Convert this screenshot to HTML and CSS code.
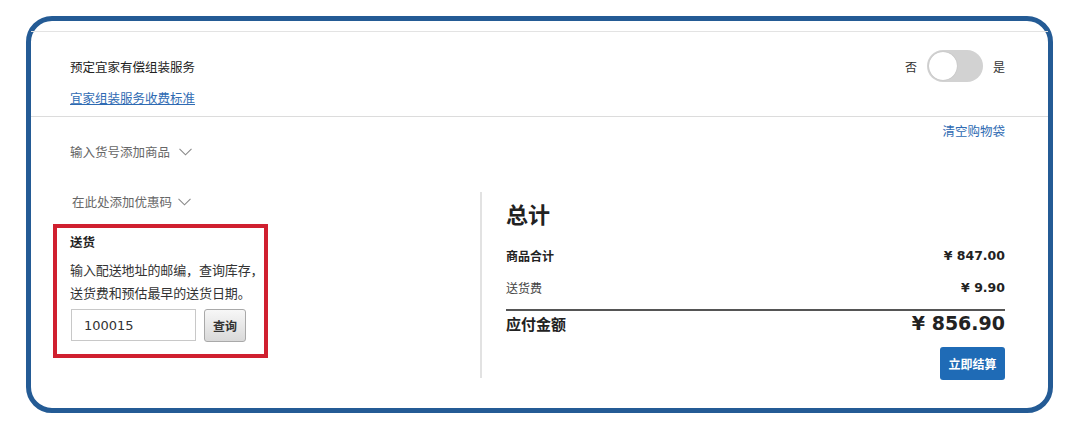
FILE: index.html
```html
<!DOCTYPE html>
<html lang="zh-CN">
<head>
    <meta charset="UTF-8">
    <meta name="viewport" content="width=device-width, initial-scale=1.0">
    <title>购物袋</title>
    <link rel="stylesheet" href="styles.css">
</head>
<body>
    <div class="frame">
        <div class="assembly">
            <div class="assembly-info">
                <p class="assembly-title">预定宜家有偿组装服务</p>
                <a class="link" href="#">宜家组装服务收费标准</a>
            </div>
            <div class="switch-row">
                <span>否</span>
                <span class="switch"><span class="knob"></span></span>
                <span>是</span>
            </div>
        </div>

        <div class="cart-head"><a class="clear-link" href="#">清空购物袋</a></div>

        <div class="cart-body">
            <div class="cart-tools">
                <div class="expander">输入货号添加商品
                    <svg class="chevron" width="13" height="8" viewBox="0 0 13 8"><polyline points="0.5,0.8 6.5,6.8 12.5,0.8" fill="none" stroke="#8a8a8a" stroke-width="1.1"/></svg>
                </div>
                <div class="expander promo">在此处添加优惠码
                    <svg class="chevron" width="13" height="8" viewBox="0 0 13 8"><polyline points="0.5,0.8 6.5,6.8 12.5,0.8" fill="none" stroke="#8a8a8a" stroke-width="1.1"/></svg>
                </div>

                <div class="delivery">
                    <h4>送货</h4>
                    <p>输入配送地址的邮编，查询库存，<br>送货费和预估最早的送货日期。</p>
                    <div class="zip-form">
                        <input class="zip-input" type="text" value="100015">
                        <button class="zip-btn">查询</button>
                    </div>
                </div>
            </div>

            <div class="summary">
                <h2>总计</h2>
                <div class="sum-row strong">
                    <span>商品合计</span>
                    <span class="price">¥ 847.00</span>
                </div>
                <div class="sum-row">
                    <span>送货费</span>
                    <span class="price">¥ 9.90</span>
                </div>
                <div class="sum-row total">
                    <span>应付金额</span>
                    <span class="price">¥ 856.90</span>
                </div>
                <div class="checkout-row">
                    <button class="checkout-btn">立即结算</button>
                </div>
            </div>
        </div>
    </div>
</body>
</html>
```

FILE: styles.css
```css
body { margin: 0; background: #fff; font-family: "Noto Sans CJK SC", "Noto Sans", sans-serif; color: #333; }
a { text-decoration: none; }

.frame { margin: 16px 0 0 26px; width: 1027px; height: 397px; box-sizing: border-box; border: 5px solid #245b95; border-radius: 26px; padding-top: 10px; background: #fff; }

/* assembly service */
.assembly { display: flex; justify-content: space-between; align-items: flex-start; height: 86px; box-sizing: border-box; border-top: 1px solid #e3e3e3; border-bottom: 1px solid #dcdcdc; padding: 0 43px 0 39px; }
.assembly-info { padding-top: 26px; }
.assembly-title { margin: 0; font-size: 12.5px; line-height: 18px; color: #222; }
.link { display: inline-block; margin-top: 13px; font-size: 12.5px; line-height: 18px; color: #2f6bb3; text-decoration: underline; }
.switch-row { display: flex; align-items: center; gap: 10px; margin-top: 18px; font-size: 12px; color: #333; }
.switch { display: flex; align-items: center; width: 56px; height: 32px; box-sizing: border-box; padding-left: 2px; border-radius: 16px; background: #d2d2d2; }
.knob { width: 28px; height: 28px; border-radius: 50%; background: #fff; box-shadow: 0 0 1px rgba(0,0,0,0.25); }

/* cart */
.cart-head { padding: 4px 43px 0 0; text-align: right; font-size: 12.5px; line-height: 20px; height: 20px; }
.clear-link { color: #2f6bb3; }
.cart-body { display: flex; }
.cart-tools { width: 449px; box-sizing: border-box; padding-left: 22px; }
.expander { display: flex; align-items: center; gap: 9px; margin-top: 1px; padding-left: 17px; font-size: 12.5px; line-height: 20px; color: #666; }
.expander.promo { margin-top: 30px; padding-left: 19px; gap: 6px; }
.chevron { display: block; }

.delivery { width: 215px; margin-top: 12px; box-sizing: border-box; border: 4px solid #d0202f; padding: 5px 0 12px 13px; }
.delivery h4 { margin: 0; font-size: 12.5px; line-height: 18px; color: #222; font-weight: 700; }
.delivery p { margin: 7px 0 0; font-size: 13px; line-height: 23px; color: #333; white-space: nowrap; letter-spacing: -0.1px; }
.zip-form { display: flex; gap: 8px; margin-top: 5px; margin-left: 1px; }
.zip-input { width: 125px; height: 32px; box-sizing: border-box; border: 1px solid #c8c8c8; padding: 0 12px; font-family: "DejaVu Sans", sans-serif; font-size: 13px; color: #333; }
.zip-btn { width: 42px; height: 33px; border: 1px solid #a9a9a9; border-radius: 3px; background: linear-gradient(#f7f7f7, #d9d9d9); font-family: "Noto Sans CJK SC", sans-serif; font-size: 12px; font-weight: 700; color: #333; padding: 0; }

/* order summary */
.summary { flex: 1; height: 186px; margin-top: 51px; border-left: 2px solid #e2e2e2; padding: 0 43px 0 24px; }
.summary h2 { margin: 0; padding-top: 6px; font-size: 22px; line-height: 30px; font-weight: 700; color: #222; }
.sum-row { display: flex; justify-content: space-between; align-items: center; margin-top: 12px; font-size: 12px; line-height: 20px; color: #444; }
.sum-row.strong { margin-top: 18px; font-weight: 700; color: #222; }
.price { font-family: "DejaVu Sans", sans-serif; font-weight: 700; font-size: 12.5px; color: #222; }
.sum-row.total { margin-top: 11px; border-top: 2px solid #555; font-size: 15px; line-height: 25px; font-weight: 700; color: #222; }
.sum-row.total .price { font-size: 19px; }
.checkout-row { display: flex; justify-content: flex-end; margin-top: 11px; }
.checkout-btn { width: 65px; height: 33px; border: none; border-radius: 3px; background: #1f6bb6; color: #fff; font-family: "Noto Sans CJK SC", sans-serif; font-size: 12px; font-weight: 700; padding: 0; }
```
